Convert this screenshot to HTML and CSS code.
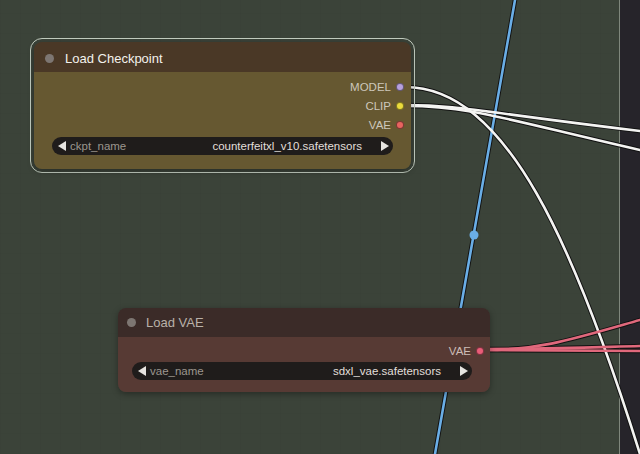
FILE: index.html
```html
<!DOCTYPE html>
<html>
<head>
<meta charset="utf-8">
<link rel="stylesheet" href="styles.css">
</head>
<body>
<div class="canvas">
  <div class="side-panel"></div>
  <svg class="links" width="640" height="454" viewBox="0 0 640 454">
    <g class="shadow">
      <path d="M515,0 L435,454"/>
      <path d="M405,105 C460,105 480,112 640,131"/>
      <path d="M405,106 C470,106 500,118 640,150"/>
      <path d="M405,87 C505,87 575,240 648,480"/>
      <path d="M484,350 C540,350 570,340 640,320"/>
      <path d="M484,349 C560,349 600,347 640,346"/>
      <path d="M484,350 L640,351"/>
    </g>
    <path class="blue" d="M515,0 L435,454"/>
    <circle cx="474" cy="235" r="4.5" fill="#6aaee6"/>
    <path class="white" d="M405,105 C460,105 480,112 640,131"/>
    <path class="white" d="M405,106 C470,106 500,118 640,150"/>
    <path class="white" d="M405,87 C505,87 575,240 648,480"/>
    <path class="pink" d="M484,350 C540,350 570,340 640,320"/>
    <path class="pink" d="M484,349 C560,349 600,347 640,346"/>
    <path class="pink" d="M484,350 L640,351"/>
  </svg>

  <div class="selection ckpt-pos">
    <div class="node ckpt">
      <div class="title"><span class="tdot"></span><span class="ttext">Load Checkpoint</span></div>
      <div class="body">
        <div class="outputs">
          <div class="out"><span class="olabel">MODEL</span><span class="pin model"></span></div>
          <div class="out"><span class="olabel">CLIP</span><span class="pin clip"></span></div>
          <div class="out"><span class="olabel">VAE</span><span class="pin vae"></span></div>
        </div>
        <div class="widget">
          <span class="arrow left"></span>
          <span class="wname">ckpt_name</span>
          <span class="wval">counterfeitxl_v10.safetensors</span>
          <span class="arrow right"></span>
        </div>
      </div>
    </div>
  </div>

  <div class="node vaenode">
    <div class="title"><span class="tdot"></span><span class="ttext">Load VAE</span></div>
    <div class="body">
      <div class="outputs">
        <div class="out"><span class="olabel">VAE</span><span class="pin vaepink"></span></div>
      </div>
      <div class="widget">
        <span class="arrow left"></span>
        <span class="wname">vae_name</span>
        <span class="wval">sdxl_vae.safetensors</span>
        <span class="arrow right"></span>
      </div>
    </div>
  </div>
</div>
</body>
</html>
```

FILE: styles.css
```css
* { box-sizing: border-box; }
html, body { margin: 0; padding: 0; }
body {
  width: 640px;
  height: 454px;
  overflow: hidden;
  font-family: "Liberation Sans", Arial, sans-serif;
}
.canvas {
  position: relative;
  width: 640px;
  height: 454px;
  overflow: hidden;
  background-color: #3b4339;
  background-image:
    repeating-linear-gradient(90deg, rgba(0,0,0,0.025) 0 1px, transparent 1px 20px),
    repeating-linear-gradient(0deg, rgba(0,0,0,0.02) 0 1px, transparent 1px 20px);
}
.side-panel {
  position: absolute;
  left: 619px;
  top: 0;
  width: 21px;
  height: 454px;
  background: #26242a;
  border-left: 1px solid #7f877c;
}
.links {
  position: absolute;
  left: 0;
  top: 0;
}
.links path { fill: none; stroke-linecap: round; }
.links .shadow path { stroke: #111; stroke-width: 4.5; }
.links .white { stroke: #f4f4f2; stroke-width: 2.6; }
.links .blue { stroke: #6aaee6; stroke-width: 2.6; }
.links .pink { stroke: #e0687c; stroke-width: 2.6; }

.selection {
  position: absolute;
  border: 1.2px solid #c3cdc0;
  border-radius: 12px;
  padding: 3px;
}
.ckpt-pos { left: 30px; top: 38px; width: 385px; }

.node {
  border-radius: 8px;
  overflow: hidden;
  box-shadow: 0 2px 6px rgba(0,0,0,0.35);
}
.title {
  display: flex;
  align-items: center;
  height: 30px;
  padding-left: 11px;
  gap: 11px;
  font-size: 13px;
}
.tdot {
  width: 9px;
  height: 9px;
  border-radius: 50%;
  background: #7d7672;
}
.body {
  display: flex;
  flex-direction: column;
}
.outputs {
  display: flex;
  flex-direction: column;
  align-items: flex-end;
}
.out {
  display: flex;
  align-items: center;
  height: 19px;
  gap: 5px;
  font-size: 11.5px;
}
.pin {
  width: 8px;
  height: 8px;
  border-radius: 50%;
  border: 1px solid rgba(0,0,0,0.45);
}
.pin.model { background: #b7a0dc; }
.pin.clip { background: #ecdc3c; }
.pin.vae { background: #e8645f; }
.pin.vaepink { background: #ea5d78; }

.widget {
  display: flex;
  align-items: center;
  height: 18px;
  border-radius: 9px;
  background: #1f1c1b;
  padding: 0 4px 0 6px;
  font-size: 11.5px;
}
.arrow {
  width: 0;
  height: 0;
  border-top: 5px solid transparent;
  border-bottom: 5px solid transparent;
}
.arrow.left { border-right: 8px solid #e6e4e0; }
.arrow.right { border-left: 8px solid #e6e4e0; }
.wname { color: #9c968e; margin-left: 4px; flex: 1; }
.wval { color: #e2dfda; margin-right: 19px; }

/* Load Checkpoint */
.ckpt .title { background: #4a3826; color: #f3f1ec; padding-top: 3px; }
.ckpt .body {
  background: #665831;
  padding: 5px 7px 14px 18px;
}
.ckpt .olabel { color: #cdc7bb; }
.ckpt .widget { margin-top: 3px; margin-right: 11px; }

/* Load VAE */
.vaenode {
  position: absolute;
  left: 118px;
  top: 308px;
  width: 372px;
}
.vaenode .title { background: #3b2b28; color: #b9b1a9; height: 29px; padding-left: 9px; gap: 10px; }
.vaenode .body {
  background: #573a34;
  padding: 4px 6px 12px 14px;
}
.vaenode .olabel { color: #cdbdb7; }
.vaenode .widget { margin-top: 2px; margin-right: 12px; }
```
